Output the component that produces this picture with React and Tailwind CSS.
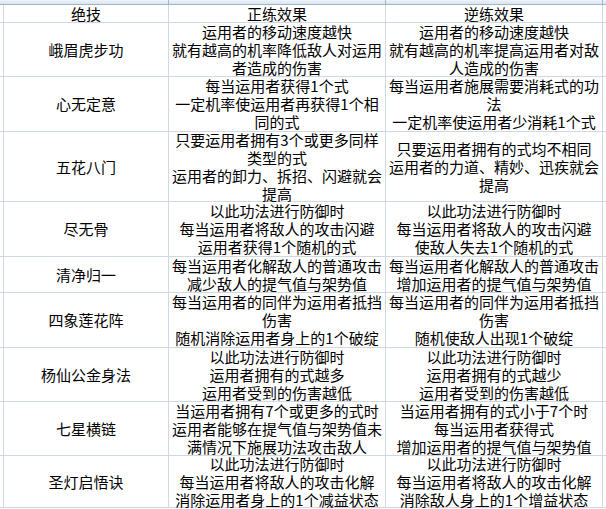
const rows = [
  {
    h: 54,
    name: "峨眉虎步功",
    a: ["运用者的移动速度越快", "就有越高的机率降低敌人对运用", "者造成的伤害"],
    b: ["运用者的移动速度越快", "就有越高的机率提高运用者对敌", "人造成的伤害"],
  },
  {
    h: 55,
    name: "心无定意",
    a: ["每当运用者获得1个式", "一定机率使运用者再获得1个相", "同的式"],
    b: ["每当运用者施展需要消耗式的功", "法", "一定机率使运用者少消耗1个式"],
  },
  {
    h: 70,
    name: "五花八门",
    a: ["只要运用者拥有3个或更多同样", "类型的式", "运用者的卸力、拆招、闪避就会", "提高"],
    b: ["只要运用者拥有的式均不相同", "运用者的力道、精妙、迅疾就会", "提高"],
  },
  {
    h: 55,
    name: "尽无骨",
    a: ["以此功法进行防御时", "每当运用者将敌人的攻击闪避", "运用者获得1个随机的式"],
    b: ["以此功法进行防御时", "每当运用者将敌人的攻击闪避", "使敌人失去1个随机的式"],
  },
  {
    h: 36,
    name: "清净归一",
    a: ["每当运用者化解敌人的普通攻击", "减少敌人的提气值与架势值"],
    b: ["每当运用者化解敌人的普通攻击", "增加运用者的提气值与架势值"],
  },
  {
    h: 55,
    name: "四象莲花阵",
    a: ["每当运用者的同伴为运用者抵挡", "伤害", "随机消除运用者身上的1个破绽"],
    b: ["每当运用者的同伴为运用者抵挡", "伤害", "随机使敌人出现1个破绽"],
  },
  {
    h: 54,
    name: "杨仙公金身法",
    a: ["以此功法进行防御时", "运用者拥有的式越多", "运用者受到的伤害越低"],
    b: ["以此功法进行防御时", "运用者拥有的式越少", "运用者受到的伤害越低"],
  },
  {
    h: 54,
    name: "七星横链",
    a: ["当运用者拥有7个或更多的式时", "运用者能够在提气值与架势值未", "满情况下施展功法攻击敌人"],
    b: ["当运用者拥有的式小于7个时", "每当运用者获得式", "增加运用者的提气值与架势值"],
  },
  {
    h: 52,
    name: "圣灯启悟诀",
    a: ["以此功法进行防御时", "每当运用者将敌人的攻击化解", "消除运用者身上的1个减益状态"],
    b: ["以此功法进行防御时", "每当运用者将敌人的攻击化解", "消除敌人身上的1个增益状态"],
  },
];

function Cell({ w, lines }) {
  return (
    <div
      className="flex flex-col items-center justify-center border-r border-[#d0d7e5] text-center whitespace-nowrap"
      style={{ width: w }}
    >
      {lines.map((l, i) => (
        <div key={i} className="leading-[18px]">
          {l}
        </div>
      ))}
    </div>
  );
}

function Row({ h, cells }) {
  return (
    <div className="flex border-b border-[#d0d7e5]" style={{ height: h }}>
      <div className="w-[4px] shrink-0 border-r border-[#d0d7e5]" />
      <Cell w={165} lines={cells[0]} />
      <Cell w={217} lines={cells[1]} />
      <Cell w={217} lines={cells[2]} />
      <div className="flex-1" />
    </div>
  );
}

export default function App() {
  return (
    <div
      className="h-[509px] w-[606px] overflow-hidden bg-white text-[15px] text-black"
      style={{ fontFamily: '"Noto Sans CJK SC", "Noto Sans", sans-serif' }}
    >
      {/* column letters strip */}
      <div className="flex h-[5px] border-b border-[#9eb6ce] bg-gradient-to-b from-[#eef3fa] to-[#dae4f0]">
        <div className="w-[4px]" />
        <div className="w-[165px] border-r border-[#9eb6ce]" />
        <div className="w-[217px] border-r border-[#9eb6ce]" />
        <div className="w-[217px] border-r border-[#9eb6ce]" />
      </div>

      <Row h={18} cells={[["绝技"], ["正练效果"], ["逆练效果"]]} />
      {rows.map((r) => (
        <Row key={r.name} h={r.h} cells={[[r.name], r.a, r.b]} />
      ))}
    </div>
  );
}
